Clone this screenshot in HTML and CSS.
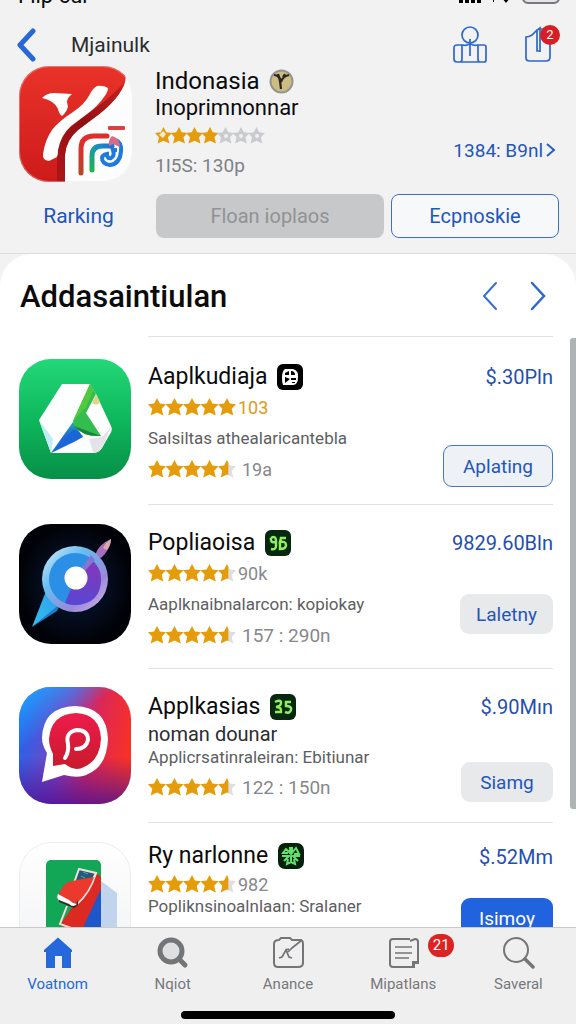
FILE: index.html
```html
<!DOCTYPE html>
<html lang="id">
<head>
    <meta charset="UTF-8">
    <meta name="viewport" content="width=device-width, initial-scale=1.0">
    <title>Indonasia</title>
    <link rel="stylesheet" href="styles.css">
</head>
<body>
    <!-- shared star shapes -->
    <svg class="sprite" aria-hidden="true">
        <defs>
            <linearGradient id="halfGold">
                <stop offset="0.55" stop-color="#e59c0a"/>
                <stop offset="0.6" stop-color="#dcdee2"/>
            </linearGradient>
        </defs>
        <symbol id="star" viewBox="0 0 18 18">
            <path d="M9 0l2.9 5.6 6.1.7-4.3 4.5 1.6 6.8L9 14.5l-6.3 3.1 1.6-6.8L0 6.3l6.1-.7z"/>
        </symbol>
        <symbol id="star-half" viewBox="0 0 18 18">
            <path fill="url(#halfGold)" d="M9 0l2.9 5.6 6.1.7-4.3 4.5 1.6 6.8L9 14.5l-6.3 3.1 1.6-6.8L0 6.3l6.1-.7z"/>
        </symbol>
        <symbol id="stars-full" viewBox="0 0 88 18">
            <use href="#star" width="18" height="18"/>
            <use href="#star" x="17.5" width="18" height="18"/>
            <use href="#star" x="35" width="18" height="18"/>
            <use href="#star" x="52.5" width="18" height="18"/>
            <use href="#star" x="70" width="18" height="18"/>
        </symbol>
        <symbol id="stars-half" viewBox="0 0 88 18">
            <use href="#star" width="18" height="18"/>
            <use href="#star" x="17.5" width="18" height="18"/>
            <use href="#star" x="35" width="18" height="18"/>
            <use href="#star" x="52.5" width="18" height="18"/>
            <use href="#star-half" x="70" width="18" height="18"/>
        </symbol>
    </svg>

    <header class="header">
        <div class="status">
            <span>Flip cur</span>
            <svg width="104" height="24" viewBox="0 0 104 24">
                <path d="M1 18h4v5H1zM7 16h4v7H7zM13 14h4v9h-4zM19 12h4v11h-4z"/>
                <path d="M35 20h1v2h-1zM44 18q4-3 8 0l-4 5z"/>
                <rect x="65" y="8" width="36" height="15" rx="5" fill="#e4e4e6" stroke="#77787b" stroke-width="2"/>
            </svg>
        </div>

        <nav class="navbar">
            <a class="back" href="#" aria-label="Kembali">
                <svg width="20" height="34" viewBox="0 0 20 34"><path d="M16 3L3 17l13 14" fill="none" stroke="#2767d8" stroke-width="5" stroke-linecap="round" stroke-linejoin="round"/></svg>
            </a>
            <span class="navbar-title">Mjainulk</span>
            <button class="icon-button" type="button" aria-label="Profil">
                <svg width="34" height="38" viewBox="0 0 34 38" fill="none" stroke="#2e68cc" stroke-width="1.7">
                    <circle cx="17" cy="9" r="8"/>
                    <path d="M17 13v17M9 19H4q-3 0-3 3v11q0 3 3 3h27q2 0 2-2V21q0-2-2-2h-7M9 19v14q0 3-2 3M9 19h1q4 1 6-1M24 19q-3 1-6-1M25 19v14q0 3 2 3"/>
                </svg>
            </button>
            <button class="icon-button" type="button" aria-label="Bagikan">
                <svg width="28" height="38" viewBox="0 0 28 38" fill="none" stroke="#2e68cc" stroke-width="1.7">
                    <path d="M13 4L8 9q-3 2-6 2v21q0 3 4 3h16q4 0 4-4V10M12 5l4-3v24M13 5v20h3M16 3h4"/>
                </svg>
                <span class="badge">2</span>
            </button>
        </nav>

        <section class="app">
            <svg class="app-logo" viewBox="0 0 114 116">
                <defs>
                    <clipPath id="logoClip"><rect width="114" height="116" rx="30"/></clipPath>
                    <linearGradient id="logoRed" x2="0" y2="1"><stop stop-color="#e93329"/><stop offset="1" stop-color="#cd1b1b"/></linearGradient>
                    <linearGradient id="logoDark" x1="1" y1="0" x2="0" y2="1"><stop stop-color="#c9211f"/><stop offset="0.5" stop-color="#8f1014"/><stop offset="1" stop-color="#b01518"/></linearGradient>
                    <linearGradient id="arcRed" x2="0" y2="1"><stop stop-color="#e12c2c"/><stop offset="1" stop-color="#b7462b"/></linearGradient>
                    <linearGradient id="arcGreen" x1="0" y1="1" x2="1" y2="0"><stop stop-color="#1fb253"/><stop offset="0.45" stop-color="#159ca4"/><stop offset="1" stop-color="#1a73e0"/></linearGradient>
                </defs>
                <g clip-path="url(#logoClip)">
                    <rect width="114" height="116" fill="#fdfdfd"/>
                    <path d="M0 0h98q11 4 8 16-5 16-27 33L59 64q-12 10-13 25v27H0z" fill="url(#logoRed)"/>
                    <path d="M106 16q-5 16-27 33L59 64q-12 10-13 25v27h-8V87q0-14 10-23l15-12q24-16 43-36z" fill="url(#logoDark)"/>
                    <path d="M23 32q5-5 12-5l18 1q-5 4-5 8l1 5q-2 6-6 9-3-2-4-7-3-8-16-11z" fill="#fff"/>
                    <path d="M78 20q6-1 11 2 0 4-4 9-6 9-17 17L52 60Q42 69 39 84q0 8-3 8l-6 3q-7-1-6-7 2-14 9-24 7-9 21-18 12-8 17-18 3-6 7-8z" fill="#fff"/>
                    <path d="M62 107V83q0-13 13-13h13" fill="none" stroke="url(#arcRed)" stroke-width="5" stroke-linecap="round"/>
                    <path d="M73 104V90q0-10 10-10h10" fill="none" stroke="url(#arcGreen)" stroke-width="5" stroke-linecap="round"/>
                    <path d="M97 74q6 3 5 11-1 13-11 14-8-1-8-7 0-3 5-4 0 5 4 4 4-2 2-8h4" fill="none" stroke="#1f7ae0" stroke-width="4"/>
                    <path d="M93 70q8 2 8 11l-7-3-4 2q-1-6 3-10z" fill="#d96a86"/>
                    <rect x="89" y="60" width="17" height="4" rx="1" fill="#da4141"/>
                </g>
                <rect x="0.5" y="0.5" width="113" height="115" rx="30" fill="none" stroke="#e2e2e3" stroke-opacity="0.4"/>
            </svg>
            <div class="app-info">
                <h1>Indonasia
                    <svg width="25" height="25" viewBox="0 0 25 25"><circle cx="12.5" cy="12.5" r="11" fill="#cdbd83" stroke="#93958f" stroke-width="2"/><path d="M5 6q5 0 6 6l1 8M20 6q-6 1-8 7M9 5q1 4 3 6M16 5l-2 3" fill="none" stroke="#29271d" stroke-width="2.2"/></svg>
                </h1>
                <p class="app-sub">Inoprimnonnar</p>
                <svg class="app-stars" width="110" height="18" viewBox="0 0 110 18">
                    <g fill="#e59c0a">
                        <use href="#star" width="17" height="17"/>
                        <use href="#star" x="15.5" width="17" height="17"/>
                        <use href="#star" x="31" width="17" height="17"/>
                        <use href="#star" x="46.5" width="17" height="17"/>
                    </g>
                    <path d="M8 4l3 3-3 4-4-3z" fill="#f6ead0"/>
                    <g fill="#c9cbcf">
                        <use href="#star" x="62" width="17" height="17"/>
                        <use href="#star" x="77.5" width="17" height="17"/>
                        <use href="#star" x="93" width="17" height="17"/>
                    </g>
                    <g fill="#f0f0f1">
                        <circle cx="71" cy="9" r="2"/>
                        <circle cx="86" cy="9" r="2"/>
                        <circle cx="102" cy="9" r="2"/>
                    </g>
                </svg>
                <p class="app-meta">1I5S: 130p</p>
            </div>
            <a class="app-link" href="#">1384: B9nl
                <svg width="10" height="16" viewBox="0 0 10 16"><path d="M1 2l7 6-7 6" fill="none" stroke="#2460c8" stroke-width="2"/></svg>
            </a>
        </section>

        <div class="actions">
            <a class="action-link" href="#">Rarking</a>
            <button class="action action-gray" type="button">Floan ioplaos</button>
            <button class="action action-outline" type="button">Ecpnoskie</button>
        </div>
    </header>

    <main class="panel">
        <div class="panel-head">
            <h2>Addasaintiulan</h2>
            <button class="arrow" type="button" aria-label="Sebelumnya">
                <svg width="16" height="30" viewBox="0 0 16 30"><path d="M14 2L2 15l12 13" fill="none" stroke="#3470d4" stroke-width="2" stroke-linecap="round"/></svg>
            </button>
            <button class="arrow" type="button" aria-label="Berikutnya">
                <svg width="16" height="30" viewBox="0 0 16 30"><path d="M2 2l12 13L2 28" fill="none" stroke="#2f69cf" stroke-width="2.5" stroke-linecap="round"/></svg>
            </button>
        </div>

        <article class="item item-first">
            <svg class="item-logo" viewBox="0 0 112 120">
                <defs>
                    <linearGradient id="driveBg" x2="0" y2="1"><stop stop-color="#23d878"/><stop offset="0.5" stop-color="#0eb85c"/><stop offset="1" stop-color="#078f48"/></linearGradient>
                    <linearGradient id="driveBlue" x2="0" y2="1"><stop stop-color="#23a2b4"/><stop offset="0.5" stop-color="#1d66dc"/><stop offset="1" stop-color="#1a82e8"/></linearGradient>
                </defs>
                <rect width="112" height="120" rx="32" fill="url(#driveBg)"/>
                <path d="M43 25h28l6 10 15 32q2 4-1 8l-8 14q-3 5-9 5H32L20 61z" fill="#fdfefe"/>
                <path d="M20 61l12 33 2-14z" fill="#c1ecf5"/>
                <path d="M32 94l22-31 10 15-9 5z" fill="url(#driveBlue)"/>
                <path d="M32 94l23-24 9 7z" fill="#1b65d8"/>
                <path d="M71 25l6 10-10 19 15 23q-18 1-27-10l-1-5z" fill="#34bd4f"/>
                <path d="M71 25L54 62l13-14 7-16z" fill="#51c83e"/>
                <path d="M77 35l4 8q-3 5-8 1z" fill="#ddd68a"/>
                <path d="M55 67l27 10q-18 1-27-10z" fill="#168537"/>
                <path d="M70 80l13-2 9-10-9 21q-3 5-9 4z" fill="#e4e4e6"/>
            </svg>
            <div class="item-body">
                <div class="item-info">
                    <h3>Aaplkudiaja
                        <svg width="26" height="26" viewBox="0 0 26 26"><rect width="26" height="26" rx="6"/><path d="M8 5h8q6 2 5 8 0 8-5 8H6q-1-2-1-7 0-7 3-9z" fill="#fff"/><path d="M8 9l4-2v4H8zM14 7q4 0 4 4h-4zM8 13l5 2-5 4zM14 14h5v2h-5zM15 18h3v1h-3z"/></svg>
                    </h3>
                    <div class="rating rating-gold"><svg class="stars"><use href="#stars-full"/></svg>103</div>
                    <p class="desc">Salsiltas athealaricantebla</p>
                    <div class="rating rating-wide"><svg class="stars"><use href="#stars-half"/></svg>19a</div>
                </div>
                <div class="item-side">
                    <span class="price">$.30Pln</span>
                    <button class="get get-outline" type="button">Aplating</button>
                </div>
            </div>
        </article>

        <article class="item item-second">
            <svg class="item-logo" viewBox="0 0 112 120">
                <defs>
                    <radialGradient id="compassBg"><stop stop-color="#071b3c"/><stop offset="1" stop-color="#010207"/></radialGradient>
                    <linearGradient id="compassRing" x2="1" y2="1"><stop stop-color="#dbedfa"/><stop offset="0.35" stop-color="#68bdf0"/><stop offset="0.7" stop-color="#9a88d8"/><stop offset="1" stop-color="#dcb8ee"/></linearGradient>
                    <linearGradient id="compassTail" x1="1" y1="0" x2="0" y2="1"><stop stop-color="#2b9df0"/><stop offset="1" stop-color="#37bcea"/></linearGradient>
                    <linearGradient id="compassPurple" x2="0" y2="1"><stop stop-color="#8b35b8"/><stop offset="1" stop-color="#5747d2"/></linearGradient>
                </defs>
                <rect width="112" height="120" rx="32" fill="url(#compassBg)"/>
                <path d="M76 31q4-11 16-16-1 11-10 19z" fill="#a66fc0"/>
                <path d="M84 24q3-6 8-9 0 6-4 11z" fill="#dfa8a6"/>
                <path d="M13 103l16-41 13 19z" fill="url(#compassTail)"/>
                <path d="M13 103l25-16 4-8z" fill="#1b7cc8"/>
                <circle cx="56" cy="55" r="33" fill="url(#compassRing)"/>
                <circle cx="56" cy="55" r="26" fill="#2b8fe6"/>
                <path d="M56 55l14-20q12 7 12 20 0 25-26 26-6 0-10-2z" fill="url(#compassPurple)"/>
                <path d="M62 45l10-14 4 5-11 12z" fill="#8177d3"/>
                <circle cx="57" cy="54" r="11.5" fill="#fff"/>
            </svg>
            <div class="item-body">
                <div class="item-info">
                    <h3>Popliaoisa
                        <svg width="26" height="26" viewBox="0 0 26 26"><rect width="26" height="26" rx="6" fill="#06280e"/><path d="M6 8q5-3 5 3v5q0 4-5 3M6 8q-1 5 4 4M21 8h-5l-1 4q6-1 6 3t-6 4v-6" fill="none" stroke="#8fee62" stroke-width="2.5"/></svg>
                    </h3>
                    <div class="rating"><svg class="stars"><use href="#stars-half"/></svg>90k</div>
                    <p class="desc">Aaplknaibnalarcon: kopiokay</p>
                    <div class="rating rating-wide rating-large"><svg class="stars"><use href="#stars-half"/></svg>157 : 290n</div>
                </div>
                <div class="item-side">
                    <span class="price">9829.60Bln</span>
                    <button class="get" type="button">Laletny</button>
                </div>
            </div>
        </article>

        <article class="item item-third">
            <svg class="item-logo" viewBox="0 0 112 117">
                <defs>
                    <linearGradient id="chatBg" x1="0" y1="0.4" x2="1" y2="0.6"><stop stop-color="#2464ee"/><stop offset="0.4" stop-color="#8541b9"/><stop offset="0.65" stop-color="#db2758"/><stop offset="1" stop-color="#fb3221"/></linearGradient>
                    <linearGradient id="chatTop" x2="0.6" y2="1"><stop stop-color="#25a4ff"/><stop offset="0.4" stop-color="#25a4ff" stop-opacity="0"/></linearGradient>
                    <linearGradient id="chatBottom" x2="0" y2="1"><stop offset="0.6" stop-color="#4a1296" stop-opacity="0"/><stop offset="1" stop-color="#4a1296" stop-opacity="0.8"/></linearGradient>
                    <linearGradient id="chatInner" x2="0" y2="1"><stop stop-color="#ed1c4b"/><stop offset="1" stop-color="#c91a2c"/></linearGradient>
                </defs>
                <rect width="112" height="117" rx="32" fill="url(#chatBg)"/>
                <rect width="112" height="117" rx="32" fill="url(#chatTop)"/>
                <rect width="112" height="117" rx="32" fill="url(#chatBottom)"/>
                <path d="M23 95l5-29q-5-8-5-15 1-31 33-32 32 1 33 33-1 27-20 35-8 5-24 1z" fill="#fff"/>
                <path d="M34 79V67q-4-8-4-15 2-25 27-26 24 1 25 26-1 21-17 28-9 5-19-3z" fill="url(#chatInner)"/>
                <path d="M46 71q4-6 3-14-3-12 9-14 11 0 11 10-2 9-12 9" fill="none" stroke="#fff" stroke-width="4" stroke-linecap="round"/>
            </svg>
            <div class="item-body">
                <div class="item-info">
                    <h3>Applkasias
                        <svg width="26" height="26" viewBox="0 0 26 26"><rect width="26" height="26" rx="6" fill="#06280e"/><path d="M5 8q6-3 6 1 0 3-5 4 6 0 5 5H5M21 8h-5v4q6 0 5 4-1 4-6 2" fill="none" stroke="#8fee62" stroke-width="2.5"/></svg>
                    </h3>
                    <p class="subtitle">noman dounar</p>
                    <p class="desc">Applicrsatinraleiran: Ebitiunar</p>
                    <div class="rating rating-wide rating-large"><svg class="stars"><use href="#stars-half"/></svg>122 : 150n</div>
                </div>
                <div class="item-side">
                    <span class="price">$.90Mın</span>
                    <button class="get" type="button">Siamg</button>
                </div>
            </div>
        </article>

        <article class="item item-fourth">
            <svg class="item-logo" viewBox="0 0 112 120">
                <defs>
                    <linearGradient id="cardShade" x2="0" y2="1"><stop stop-color="#fff"/><stop offset="1" stop-color="#f1f2f4"/></linearGradient>
                </defs>
                <rect x="0.5" y="0.5" width="111" height="119" rx="32" fill="url(#cardShade)" stroke="#eceeef"/>
                <path d="M82 39l16 12v69H82z" fill="#c1d4ee"/>
                <rect x="27" y="18" width="55" height="90" rx="5" fill="#12a657"/>
                <path d="M82 44v64H52z" fill="#1d57c9"/>
                <path d="M77 31l5 4v12L61 92l-20-9z" fill="#dc2a23"/>
                <path d="M60 27l17 4-7 14-15-4z" fill="#245b79" stroke="#f3dfd7" stroke-width="2"/>
                <path d="M62 34l4 2M64 30l5 2" stroke="#5fa0b8"/>
                <path d="M77 31q-6 20-19 31M48 64l-7 18 14 5" fill="none" stroke="#f3dfd7" stroke-width="2"/>
                <path d="M39 53q5-10 10-13 12-3 26-5-5 15-18 27z" fill="#eb3a2d"/>
                <path d="M40 55l17 7 2-4v5l-4 3-15-6z" fill="#3b2424"/>
                <path d="M58 62q-4 4-8 0l-10-4q-3-2-1-6l11 6q3 3 8 4z" fill="#fff"/>
            </svg>
            <div class="item-body">
                <div class="item-info">
                    <h3>Ry narlonne
                        <svg width="26" height="26" viewBox="0 0 26 26"><rect width="26" height="26" rx="7" fill="#04210b"/><path d="M12 4v6L8 6 5 10h5M14 4v6l4-5 3 6h-5M4 13h7l-5 5M22 13h-7l5 5M13 13v7M10 16l-1 5 4-2 4 2-1-5" fill="none" stroke="#62e06c" stroke-width="2"/></svg>
                    </h3>
                    <div class="rating"><svg class="stars"><use href="#stars-half"/></svg>982</div>
                    <p class="desc">Popliknsinoalnlaan: Sralaner</p>
                    <div class="rating rating-wide rating-large"><svg class="stars"><use href="#stars-half"/></svg>737n</div>
                </div>
                <div class="item-side">
                    <span class="price">$.52Mm</span>
                    <button class="get get-blue" type="button">Isimoy</button>
                </div>
            </div>
        </article>
        <div class="scrollbar"></div>
    </main>

    <footer class="tabbar">
        <nav class="tabs">
            <a class="tab tab-active" href="#">
                <svg width="34" height="34" viewBox="0 0 34 34"><path d="M17 1.5L31 14v2h-1v16h-9V20h-7v12H5V16H3v-2z" fill="#2468dc"/></svg>
                Voatnom
            </a>
            <a class="tab" href="#">
                <svg width="34" height="34" viewBox="0 0 34 34"><circle cx="15" cy="15" r="11" fill="#dedfe0" stroke="#747577" stroke-width="5"/><path d="M23 23l6 6" stroke="#747577" stroke-width="5" stroke-linecap="round"/></svg>
                Nqiot
            </a>
            <a class="tab" href="#">
                <svg width="34" height="34" viewBox="0 0 34 34" fill="none" stroke="#747577" stroke-width="2"><path d="M22 4h7q3 0 3 4v19q0 4-5 4H7q-4 0-4-4V8q0-4 5-4l2-2h9l2 2h3"/><path d="M8 22l3-1 4-7 3 7 3 1M17 16l4-4 10-8M15 14l3-1" stroke-width="1.7"/></svg>
                Anance
            </a>
            <a class="tab" href="#">
                <svg width="34" height="34" viewBox="0 0 34 34" fill="none" stroke="#747577" stroke-width="2"><path d="M24 3H7Q4 3 4 6v22q0 3 3 3h21v-4h4V6q0-3-3-3l-5 2M27 31v-5h5"/><path d="M9 11h17M9 17h17M9 22h14" stroke-width="1.7"/></svg>
                Mipatlans
                <span class="tab-badge">21</span>
            </a>
            <a class="tab" href="#">
                <svg width="34" height="34" viewBox="0 0 34 34" fill="none" stroke="#747577"><circle cx="15" cy="14" r="12" stroke-width="2"/><path d="M24 23l8 8" stroke-width="3.5" stroke-linecap="round"/></svg>
                Saveral
            </a>
        </nav>
        <div class="home-bar"></div>
    </footer>
</body>
</html>
```

FILE: styles.css
```css
* {
    box-sizing: border-box;
}

body {
    margin: 0;
    display: flex;
    flex-direction: column;
    height: 100vh;
    overflow: hidden;
    font-family: Roboto, "Liberation Sans", Arial, sans-serif;
    background-color: #f2f2f3;
    color: #0b0b0c;
}

h1, h2, h3, p {
    margin: 0;
    font-weight: 400;
}

a {
    text-decoration: none;
    color: #1f56bd;
}

button {
    font-family: inherit;
    border: none;
    padding: 0;
    background: none;
    color: #1f56bd;
    cursor: pointer;
}

svg {
    flex-shrink: 0;
}

.sprite {
    position: absolute;
    width: 0;
    height: 0;
}

/* header */
.header {
    padding-bottom: 15px;
    border-bottom: 1px solid #dcdddf;
}

.status {
    display: flex;
    justify-content: space-between;
    align-items: flex-end;
    height: 8px;
    overflow: hidden;
    padding: 0 14px 0 18px;
    font-size: 22px;
    line-height: 24px;
}

.status svg {
    margin-bottom: 4px;
}

.navbar {
    display: flex;
    align-items: center;
    height: 58px;
    padding: 16px 24px 0 17px;
}

.back {
    display: flex;
    width: 54px;
}

.navbar-title {
    flex: 1;
    font-size: 21px;
    color: #2b2c2e;
}

.icon-button {
    position: relative;
    display: flex;
    margin-left: 37px;
}

.badge {
    position: absolute;
    top: -1px;
    right: -8px;
    width: 20px;
    height: 20px;
    border-radius: 10px;
    background: #d81e25;
    color: #fff;
    font-size: 13px;
    line-height: 20px;
    text-align: center;
}

.app {
    display: flex;
    padding: 0 20px 0 19px;
}

.app-logo {
    width: 114px;
    height: 116px;
    margin-right: 22px;
}

.app-info {
    flex: 1;
}

.app-info h1 {
    display: flex;
    align-items: center;
    gap: 9px;
    font-size: 24px;
    line-height: 30px;
}

.app-sub {
    font-size: 22px;
    line-height: 24px;
}

.app-stars {
    display: block;
    margin: 7px 0;
}

.app-meta {
    font-size: 19px;
    line-height: 28px;
    color: #808184;
}

.app-link {
    display: flex;
    align-items: center;
    gap: 3px;
    margin-top: 74px;
    height: 20px;
    font-size: 19px;
}

.actions {
    display: grid;
    grid-template-columns: 117px 240fr 168fr;
    gap: 7px;
    padding: 12px 17px 0 20px;
    font-size: 21px;
    line-height: 44px;
}

.action-link {
    text-align: center;
}

.action {
    height: 44px;
    border-radius: 8px;
    font-size: 20px;
}

.action-gray {
    background: #c7c8c9;
    color: #919295;
    margin-left: 12px;
}

.action-outline {
    border: 1px solid #3b71cd;
    background: #f7f8fa;
}

/* list */
.panel {
    position: relative;
    flex: 1;
    min-height: 0;
    overflow: hidden;
    background: #fff;
    border-radius: 32px 32px 0 0;
}

.panel-head {
    display: flex;
    align-items: center;
    height: 82px;
    padding: 2px 30px 0 20px;
}

.panel-head h2 {
    flex: 1;
    font-size: 31px;
    font-weight: 500;
}

.arrow {
    display: flex;
    margin-left: 32px;
}

.item {
    display: flex;
    gap: 17px;
    padding: 0 23px 0 19px;
}

.item-logo {
    width: 112px;
    height: 120px;
    margin-top: 20px;
}

.item-body {
    flex: 1;
    display: flex;
    justify-content: space-between;
    padding-top: 22px;
    border-top: 1px solid #e1e2e3;
}

.item-info h3 {
    display: flex;
    align-items: center;
    gap: 10px;
    font-size: 23px;
    line-height: 32px;
    white-space: nowrap;
}

.rating {
    display: flex;
    align-items: center;
    gap: 2px;
    height: 28px;
    font-size: 18px;
    color: #87888b;
}

.rating-gold {
    color: #dd9a1c;
}

.rating-wide {
    gap: 6px;
}

.rating-large {
    font-size: 19px;
}

.stars {
    width: 88px;
    height: 18px;
    fill: #e59c0a;
}

.subtitle {
    font-size: 20px;
    line-height: 22px;
    color: #2c2d2f;
}

.desc {
    font-size: 17px;
    line-height: 34px;
    color: #5d5e61;
    white-space: nowrap;
}

.item-side {
    display: flex;
    flex-direction: column;
    align-items: flex-end;
}

.price {
    font-size: 20px;
    line-height: 32px;
    color: #1f4fb0;
}

.get {
    min-width: 92px;
    height: 40px;
    margin-top: 35px;
    padding: 0 16px;
    border-radius: 9px;
    background: #e8e9eb;
    font-size: 19px;
}

.get-outline {
    height: 42px;
    padding: 0 19px;
    border: 1px solid #4478cc;
    background: #eef1f6;
}

.get-blue {
    background: #2163df;
    color: #fff;
}

.item-first .item-logo {
    margin-top: 23px;
}

.item-first .item-body {
    min-height: 168px;
    padding-top: 24px;
}

.item-first .get {
    margin-top: 52px;
}

.item-second .item-body {
    min-height: 164px;
}

.item-third .item-logo {
    height: 117px;
    margin-top: 19px;
}

.item-third .item-body {
    min-height: 154px;
}

.item-third .desc {
    line-height: 24px;
}

.item-third .rating {
    margin-top: 4px;
}

.item-third .get {
    margin-top: 39px;
}

.item-fourth .item-body {
    padding-top: 18px;
}

.item-fourth .rating {
    height: 26px;
}

.item-fourth .desc {
    line-height: 18px;
}

.item-fourth .desc + .rating {
    margin-top: 8px;
}

.item-fourth .item-info h3 {
    line-height: 30px;
}

.item-fourth .get {
    margin-top: 25px;
}

.scrollbar {
    position: absolute;
    top: 84px;
    right: 0;
    width: 6px;
    height: 70%;
    border-radius: 3px 0 0 3px;
    background: #b0b3b3;
}

/* bottom tabs */
.tabbar {
    padding: 8px 0 5px;
    border-top: 1px solid #c9cacc;
    background: #efeff0;
}

.tabs {
    display: grid;
    grid-template-columns: repeat(5, 1fr);
}

.tab {
    position: relative;
    display: flex;
    flex-direction: column;
    align-items: center;
    font-size: 15px;
    line-height: 28px;
    color: #77787b;
}

.tab-active {
    color: #2468dc;
}

.tab-badge {
    position: absolute;
    top: -2px;
    left: 50%;
    width: 26px;
    height: 23px;
    margin-left: 25px;
    border-radius: 12px;
    background: #dd2222;
    color: #fff;
    font-size: 15px;
    line-height: 23px;
    text-align: center;
}

.home-bar {
    width: 37%;
    height: 8px;
    margin: 13px auto 0;
    border-radius: 4px;
    background: #000;
}
```
